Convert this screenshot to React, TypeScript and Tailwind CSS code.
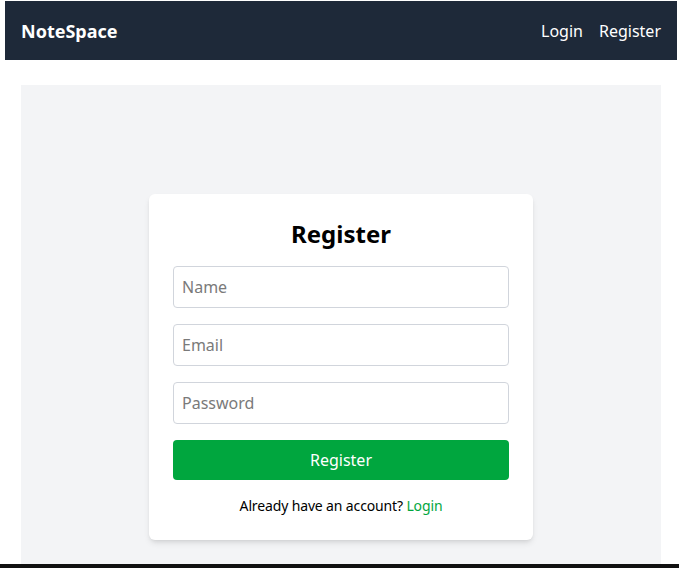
import { useState } from 'react';

export default function App() {
  const [name, setName] = useState('');
  const [email, setEmail] = useState('');
  const [password, setPassword] = useState('');

  return (
    <div
      className="h-[568px] flex flex-col bg-white overflow-hidden"
      style={{ fontFamily: '"Noto Sans", "Open Sans", sans-serif' }}
    >
      <div className="flex-1 flex flex-col pt-[1px] pl-[5px] pr-[2px] min-h-0">
        <nav className="h-[59px] bg-[#1e2939] text-white flex items-center justify-between px-4">
          <span className="text-lg font-bold">NoteSpace</span>
          <div className="flex items-center gap-4 text-base">
            <a href="#" className="hover:underline">Login</a>
            <a href="#" className="hover:underline">Register</a>
          </div>
        </nav>

        <main className="flex-1 px-4 pt-[25px] min-h-0">
          <div className="h-full bg-gray-100 flex justify-center pt-[109px]">
            <div className="w-[384px] h-fit bg-white rounded-md shadow-md p-6">
              <h2 className="text-2xl font-bold text-center mb-4 text-black">Register</h2>
              <form className="flex flex-col gap-4" onSubmit={(e) => e.preventDefault()}>
                <input
                  type="text"
                  placeholder="Name"
                  value={name}
                  onChange={(e) => setName(e.target.value)}
                  className="w-full px-2 py-2 border border-gray-300 rounded text-base text-black placeholder:text-[#7a7a7a] focus:outline-none"
                />
                <input
                  type="email"
                  placeholder="Email"
                  value={email}
                  onChange={(e) => setEmail(e.target.value)}
                  className="w-full px-2 py-2 border border-gray-300 rounded text-base text-black placeholder:text-[#7a7a7a] focus:outline-none"
                />
                <input
                  type="password"
                  placeholder="Password"
                  value={password}
                  onChange={(e) => setPassword(e.target.value)}
                  className="w-full px-2 py-2 border border-gray-300 rounded text-base text-black placeholder:text-[#7a7a7a] focus:outline-none"
                />
                <button
                  type="submit"
                  className="w-full py-2 bg-green-600 text-white rounded text-base hover:bg-green-700"
                >
                  Register
                </button>
              </form>
              <p className="mt-4 text-sm text-center text-black tracking-[-0.01em]">
                Already have an account? <a href="#" className="text-green-600">Login</a>
              </p>
            </div>
          </div>
        </main>
      </div>
      <div className="h-1 bg-[#111111]" />
    </div>
  );
}
